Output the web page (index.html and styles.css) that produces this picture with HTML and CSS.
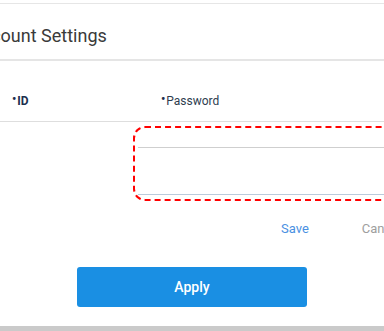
FILE: index.html
```html
<!DOCTYPE html>
<html lang="en">
<head>
    <meta charset="UTF-8">
    <meta name="viewport" content="width=device-width, initial-scale=1.0">
    <title>Account Settings</title>
    <link rel="stylesheet" href="styles.css">
</head>
<body>
    <div class="panel">
        <!-- Cabecera del panel -->
        <div class="panel-header">
            <h2>Account Settings</h2>
        </div>

        <!-- Tabla de cuentas -->
        <div class="grid">
            <div class="grid-head col-id"><span class="req">•</span>ID</div>
            <div class="grid-head col-pw"><span class="req">•</span>Password</div>

            <div class="grid-cell"></div>
            <div class="grid-cell">
                <div class="edit-box">
                    <div class="field"></div>
                </div>
            </div>
        </div>

        <div class="row-actions">
            <a href="#" class="save">Save</a>
            <a href="#" class="cancel">Cancel</a>
        </div>

        <div class="panel-footer">
            <button>Apply</button>
        </div>
    </div>
    <div class="bottom-bar"></div>
</body>
</html>
```

FILE: styles.css
```css
body {
    font-family: Roboto, "Liberation Sans", sans-serif;
    background-color: #fff;
    margin: 0;
    overflow: hidden;
}

.panel {
    margin-top: 3px;
    border-top: 1px solid #e6e6e6;
    width: 520px;
}

.panel-header {
    padding: 20px 16px 12px 0;
    border-bottom: 2px solid #e5e5e5;
}

.panel-header h2 {
    margin: 0 0 0 -30px;
    font-size: 18px;
    font-weight: 400;
    line-height: 23px;
    color: #3a3a3a;
}

.grid {
    display: grid;
    grid-template-columns: 133px 320px;
}

.grid-head {
    font-size: 12px;
    line-height: 16px;
    padding: 30px 0 12px;
    border-bottom: 1px solid #dedede;
}

.col-id {
    padding-left: 12px;
    font-weight: 700;
    color: #1c2f4e;
}

.col-pw {
    padding-left: 28px;
    color: #2e3d4f;
}

.req {
    font-size: 12px;
    font-weight: 700;
    color: #1c2f4e;
    vertical-align: 2px;
    margin-right: 1px;
}

.grid-cell {
    padding-top: 4px;
}

.edit-box {
    border: 2px dashed #f00;
    border-radius: 12px;
    padding: 19px 0 4px 3px;
}

.field {
    height: 46px;
    border-top: 1px solid #cfcfcf;
    border-bottom: 1px solid #b9cadb;
}

.row-actions {
    display: flex;
    gap: 53px;
    padding: 20px 0 0 281px;
    font-size: 13px;
    line-height: 16px;
}

.row-actions a {
    text-decoration: none;
}

.save {
    color: #4a90e2;
}

.cancel {
    color: #9e9e9e;
}

.panel-footer {
    width: 384px;
    display: flex;
    justify-content: center;
    padding: 30px 0 19px;
}

.panel-footer button {
    width: 230px;
    height: 40px;
    background: #1a8fe3;
    color: #fff;
    border: none;
    border-radius: 3px;
    font-family: inherit;
    font-size: 14px;
    font-weight: 500;
    cursor: pointer;
}

.bottom-bar {
    height: 40px;
    background: #cacaca;
}
```
